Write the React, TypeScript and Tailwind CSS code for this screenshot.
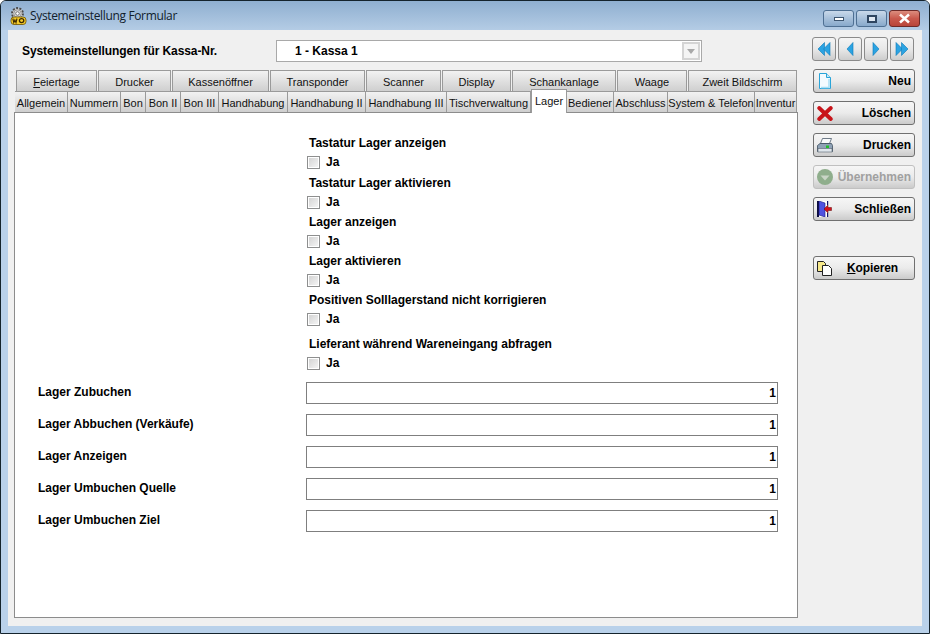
import React from 'react';

const topTabs = [
  { label: 'Feiertage', w: 'w-[81px]', key: 'F' },
  { label: 'Drucker', w: 'w-[73px]' },
  { label: 'Kassenöffner', w: 'w-[97px]' },
  { label: 'Transponder', w: 'w-[95px]' },
  { label: 'Scanner', w: 'w-[75px]' },
  { label: 'Display', w: 'w-[69px]' },
  { label: 'Schankanlage', w: 'w-[104px]' },
  { label: 'Waage', w: 'w-[70px]' },
  { label: 'Zweit Bildschirm', w: 'w-[109px]' },
];

const bottomTabs = [
  { label: 'Allgemein', w: 'w-[53px]' },
  { label: 'Nummern', w: 'w-[53px]' },
  { label: 'Bon', w: 'w-[25px]' },
  { label: 'Bon II', w: 'w-[35px]' },
  { label: 'Bon III', w: 'w-[38px]' },
  { label: 'Handhabung', w: 'w-[69px]' },
  { label: 'Handhabung II', w: 'w-[78px]' },
  { label: 'Handhabung III', w: 'w-[81px]' },
  { label: 'Tischverwaltung', w: 'w-[84px]' },
  { label: 'Lager', w: 'w-[36px]', active: true },
  { label: 'Bediener', w: 'w-[47px]' },
  { label: 'Abschluss', w: 'w-[54px]' },
  { label: 'System & Telefon', w: 'w-[87px]' },
  { label: 'Inventur', w: 'w-[42px]' },
];

const checks = [
  { label: 'Tastatur Lager anzeigen', cls: 'mt-[23px]' },
  { label: 'Tastatur Lager aktivieren', cls: 'mt-[7px]' },
  { label: 'Lager anzeigen', cls: 'mt-[6px]' },
  { label: 'Lager aktivieren', cls: 'mt-[6px]' },
  { label: 'Positiven Solllagerstand nicht korrigieren', cls: 'mt-[6px]' },
  { label: 'Lieferant während Wareneingang abfragen', cls: 'mt-[11px]' },
];

const fields = ['Lager Zubuchen', 'Lager Abbuchen (Verkäufe)', 'Lager Anzeigen', 'Lager Umbuchen Quelle', 'Lager Umbuchen Ziel'];

const LogoIcon = () => (
  <svg width="18" height="18" viewBox="0 0 18 18">
    <circle cx="8.500" cy="6.500" r="5.500" fill="#c4c4c4" stroke="#4a4a4a" strokeWidth="1.800" strokeDasharray="2 1.400" />
    <circle cx="8.500" cy="6.500" r="3.600" fill="#e2e2e2" stroke="#777" strokeWidth="0.600" />
    <circle cx="8.500" cy="6.500" r="1.800" fill="#fff" stroke="#555" strokeWidth="0.800" />
    <rect x="2" y="10" width="15" height="7.500" rx="3" fill="#f6cc2a" stroke="#6b5000" strokeWidth="0.800" />
    <path d="M3.800 11.500l1 4.200 1.100-2.800 1.100 2.800 1-4.200" fill="none" stroke="#3d2a00" strokeWidth="1.100" />
    <ellipse cx="12.600" cy="13.600" rx="2.200" ry="2" fill="none" stroke="#3d2a00" strokeWidth="1.300" />
  </svg>
);

const NewIcon = () => (
  <svg width="12" height="16" viewBox="0 0 12 16">
    <path d="M.500.500h7l4 4v11h-11z" fill="#f4fbff" stroke="#2aa4d8" strokeWidth="1" />
    <path d="M7.500.500v4h4" fill="#c4e8f8" stroke="#2aa4d8" strokeWidth="1" />
    <path d="M10 6v8.500H2" fill="none" stroke="#a8def4" strokeWidth="1.500" />
  </svg>
);

const DeleteIcon = () => (
  <svg width="16" height="15" viewBox="0 0 16 15">
    <path d="M2.200 2l11.600 11M13.800 2L2.200 13" stroke="#c8141a" strokeWidth="3.800" strokeLinecap="round" />
  </svg>
);

const PrintIcon = () => (
  <svg width="16" height="15" viewBox="0 0 16 15">
    <path d="M5.500.500h9l-2 5h-9z" fill="#f8fafc" stroke="#4c5c6c" strokeWidth="0.800" />
    <path d="M3 5.500h11.500l1 2v6H.500v-6z" fill="#8fa2b6" stroke="#3e4e5e" strokeWidth="0.800" />
    <rect x="1" y="10.500" width="14" height="3.500" fill="#dfe6ec" stroke="#56626e" strokeWidth="0.600" />
    <rect x="9" y="7.500" width="3" height="2.500" fill="#1fc02a" />
  </svg>
);

const ApplyIcon = () => (
  <svg width="16" height="16" viewBox="0 0 16 16">
    <circle cx="8" cy="8" r="8" fill="#8fae8c" />
    <path d="M3.500 6.500h9L8 11.500z" fill="#c9d5c6" />
  </svg>
);

const DoorIcon = () => (
  <svg width="15" height="16" viewBox="0 0 15 16">
    <rect x="0" y="0" width="11" height="16" fill="#fff" />
    <rect x="0" y="0" width="2" height="16" fill="#0c0c40" />
    <path d="M2 0l6 2v14l-6-2z" fill="#4f52e0" stroke="#1c1c80" strokeWidth="0.600" />
    <path d="M10 0h1.200v4H10zM10 12h1.200v4H10z" fill="#15156a" />
    <path d="M7 8l4-4v2.500h3.500v3H11V12z" fill="#d4101a" stroke="#5a0808" strokeWidth="0.500" />
  </svg>
);

const CopyIcon = () => (
  <svg width="15" height="15" viewBox="0 0 15 15">
    <path d="M.500.500h6l2 2v8h-8z" fill="#f6e88a" stroke="#222" strokeWidth="1" />
    <path d="M5.500 4.500h6l3 3v7h-9z" fill="#fff" stroke="#222" strokeWidth="1" />
  </svg>
);

const NavButton = ({ dir, twice }: { dir: 'left' | 'right'; twice?: boolean }) => (
  <button className="w-[24px] h-[24px] flex items-center justify-center rounded-[3px] border border-[#8a8a8a] bg-gradient-to-b from-[#f4f4f4] via-[#e8e8e8] to-[#cdcdcd]">
    <svg width="16" height="14" viewBox="0 0 16 14">
      {dir === 'left' ? (
        twice ? (
          <g fill="#2ba3e2" stroke="#0a78b8" strokeWidth="0.600">
            <path d="M8.500.500v13L2 7z" />
            <path d="M14 .500v13L7.500 7z" />
          </g>
        ) : (
          <path d="M11 .500v13L5 7z" fill="#2ba3e2" stroke="#0a78b8" strokeWidth="0.600" />
        )
      ) : twice ? (
        <g fill="#2ba3e2" stroke="#0a78b8" strokeWidth="0.600">
          <path d="M2 .500v13L8.500 7z" />
          <path d="M7.500 .500v13L14 7z" />
        </g>
      ) : (
        <path d="M5 .500v13L11 7z" fill="#2ba3e2" stroke="#0a78b8" strokeWidth="0.600" />
      )}
    </svg>
  </button>
);

const ActionButton = ({ icon, children, disabled, center }: { icon: React.ReactNode; children: React.ReactNode; disabled?: boolean; center?: boolean }) => (
  <button
    className={`w-[102px] h-[24px] flex items-center pl-px pr-[3px] rounded-[3px] border bg-gradient-to-b from-[#f6f6f6] via-[#ebebeb] to-[#cbcbcb] text-[12px] font-bold ${
      disabled ? 'border-[#c0c0c0] text-[#a0a0a0]' : 'border-[#707070] text-black'
    }`}
  >
    <span className="w-[19px] flex items-center justify-center shrink-0">{icon}</span>
    <span className={center ? 'flex-1 text-center tracking-[-0.1px]' : 'flex-1 text-right'}>{children}</span>
  </button>
);

const WinButton = ({ w, red, children }: { w: string; red?: boolean; children: React.ReactNode }) => (
  <div
    className={`${w} h-[17px] flex items-center justify-center rounded-[3px] border ${
      red ? 'border-[#6e2a28] bg-gradient-to-b from-[#dc8d7f] via-[#c9594d] to-[#b8453a]' : 'border-[#4e6f92] bg-gradient-to-b from-[#c9d9ea] via-[#a7c0da] to-[#88a9cb]'
    }`}
  >
    {children}
  </div>
);

export default function App() {
  return (
    <div className="w-[930px] h-[634px] overflow-hidden bg-[#b9d1ea] border border-[#14232c] rounded-t-[6px] flex flex-col font-['Liberation_Sans',Arial,sans-serif] text-black">
      {/* title bar */}
      <div className="h-[29px] shrink-0 flex items-center pl-[8px] pr-[9px] bg-gradient-to-b from-[#8fafd0] to-[#b4cce5]">
        <LogoIcon />
        <span className="ml-[3px] text-[12px] text-[#10202c] font-['Open_Sans',sans-serif] tracking-[-0.35px]">Systemeinstellung Formular</span>
        <div className="ml-auto flex gap-[2px] self-start mt-[9px]">
          <WinButton w="w-[31px]">
            <div className="w-[10px] h-[4px] bg-white border border-[#3e5670]" />
          </WinButton>
          <WinButton w="w-[31px]">
            <div className="w-[10px] h-[8px] border-2 border-[#2e4560] bg-[#dfe8f2]" />
          </WinButton>
          <WinButton w="w-[31px]" red>
            <svg width="13" height="11" viewBox="0 0 13 11">
              <path d="M2 1.500l9 8M11 1.500l-9 8" stroke="#fff" strokeWidth="2.500" />
            </svg>
          </WinButton>
        </div>
      </div>

      {/* client area */}
      <div className="mx-[7px] h-[596px] bg-[#f0f0f0] flex">
        <div className="w-[796px] shrink-0 pl-[6px] pt-[10px]">
          <div className="h-[22px] flex items-center">
            <span className="ml-[8px] w-[254px] text-[12px] font-bold tracking-[-0.09px]">Systemeinstellungen für Kassa-Nr.</span>
            <div className="w-[426px] h-[22px] flex items-center bg-white border border-[#a9a9a9]">
              <span className="ml-[18px] text-[12px] font-bold">1 - Kassa 1</span>
              <div className="ml-auto mr-px w-[18px] h-[18px] flex items-center justify-center border-2 border-[#d4d4d4] bg-[#f4f4f4]">
                <svg width="8" height="5" viewBox="0 0 8 5">
                  <path d="M0 0h8L4 5z" fill="#a8a8a8" />
                </svg>
              </div>
            </div>
          </div>

          {/* tabs */}
          <div className="mt-[8px] ml-[2px] h-[21px] flex gap-px">
            {topTabs.map((t) => (
              <div
                key={t.label}
                className={`${t.w} h-[21px] shrink-0 flex items-center justify-center pt-[3px] border-t border-x border-[#9a9a9a] bg-gradient-to-b from-[#f2f2f2] to-[#cfcfcf] text-[11px] text-[#111]`}
              >
                {t.key ? (
                  <span>
                    <u>{t.key}</u>
                    {t.label.slice(1)}
                  </span>
                ) : (
                  t.label
                )}
              </div>
            ))}
          </div>
          <div className="ml-px w-[783px] h-[21px] flex">
            {bottomTabs.map((t) =>
              t.active ? (
                <div
                  key={t.label}
                  className={`${t.w} h-[24px] -mt-[2px] -mb-px shrink-0 z-10 flex items-center justify-center whitespace-nowrap border-t border-x border-[#9a9a9a] bg-white text-[11px] text-[#111]`}
                >
                  {t.label}
                </div>
              ) : (
                <div
                  key={t.label}
                  className={`${t.w} h-[21px] shrink-0 flex items-center justify-center whitespace-nowrap pt-[3px] border-t border-r border-[#9a9a9a] bg-gradient-to-b from-[#f2f2f2] to-[#cfcfcf] text-[11px] text-[#111]`}
                >
                  {t.label}
                </div>
              )
            )}
          </div>

          {/* panel */}
          <div className="w-[784px] h-[506px] bg-white border border-[#8c8c8c]">
            <div className="pl-[294px] flex flex-col">
              {checks.map((c) => (
                <div key={c.label} className={c.cls}>
                  <div className="h-[14px] leading-[14px] text-[12px] font-bold whitespace-nowrap">{c.label}</div>
                  <div className="mt-[5px] h-[14px] flex items-center -ml-[2px]">
                    <div className="w-[13px] h-[13px] p-px border border-[#8e8f8f] bg-white">
                      <div className="w-full h-full bg-gradient-to-br from-[#d4d4d4] to-[#f4f4f4]" />
                    </div>
                    <span className="ml-[6px] text-[12px] font-bold">Ja</span>
                  </div>
                </div>
              ))}
            </div>
            <div className="mt-[12px] pl-[23px] flex flex-col gap-[10px]">
              {fields.map((f) => (
                <div key={f} className="h-[22px] flex items-center">
                  <span className="w-[268px] text-[12px] font-bold pb-[2px]">{f}</span>
                  <div className="w-[472px] h-[22px] border border-[#7f7f7f] bg-white text-right pr-[1px] text-[12px] font-bold leading-[20px]">1</div>
                </div>
              ))}
            </div>
          </div>
        </div>

        {/* right column */}
        <div className="pl-[8px] pt-[7px] flex flex-col">
          <div className="flex gap-[2px]">
            <NavButton dir="left" twice />
            <NavButton dir="left" />
            <NavButton dir="right" />
            <NavButton dir="right" twice />
          </div>
          <div className="mt-[8px] ml-px flex flex-col gap-[8px]">
            <ActionButton icon={<NewIcon />}>Neu</ActionButton>
            <ActionButton icon={<DeleteIcon />}>Löschen</ActionButton>
            <ActionButton icon={<PrintIcon />}>Drucken</ActionButton>
            <ActionButton icon={<ApplyIcon />} disabled>Übernehmen</ActionButton>
            <ActionButton icon={<DoorIcon />}>Schließen</ActionButton>
            <div className="mt-[27px]">
              <ActionButton icon={<CopyIcon />} center>
                <u>K</u>opieren
              </ActionButton>
            </div>
          </div>
        </div>
      </div>
    </div>
  );
}
